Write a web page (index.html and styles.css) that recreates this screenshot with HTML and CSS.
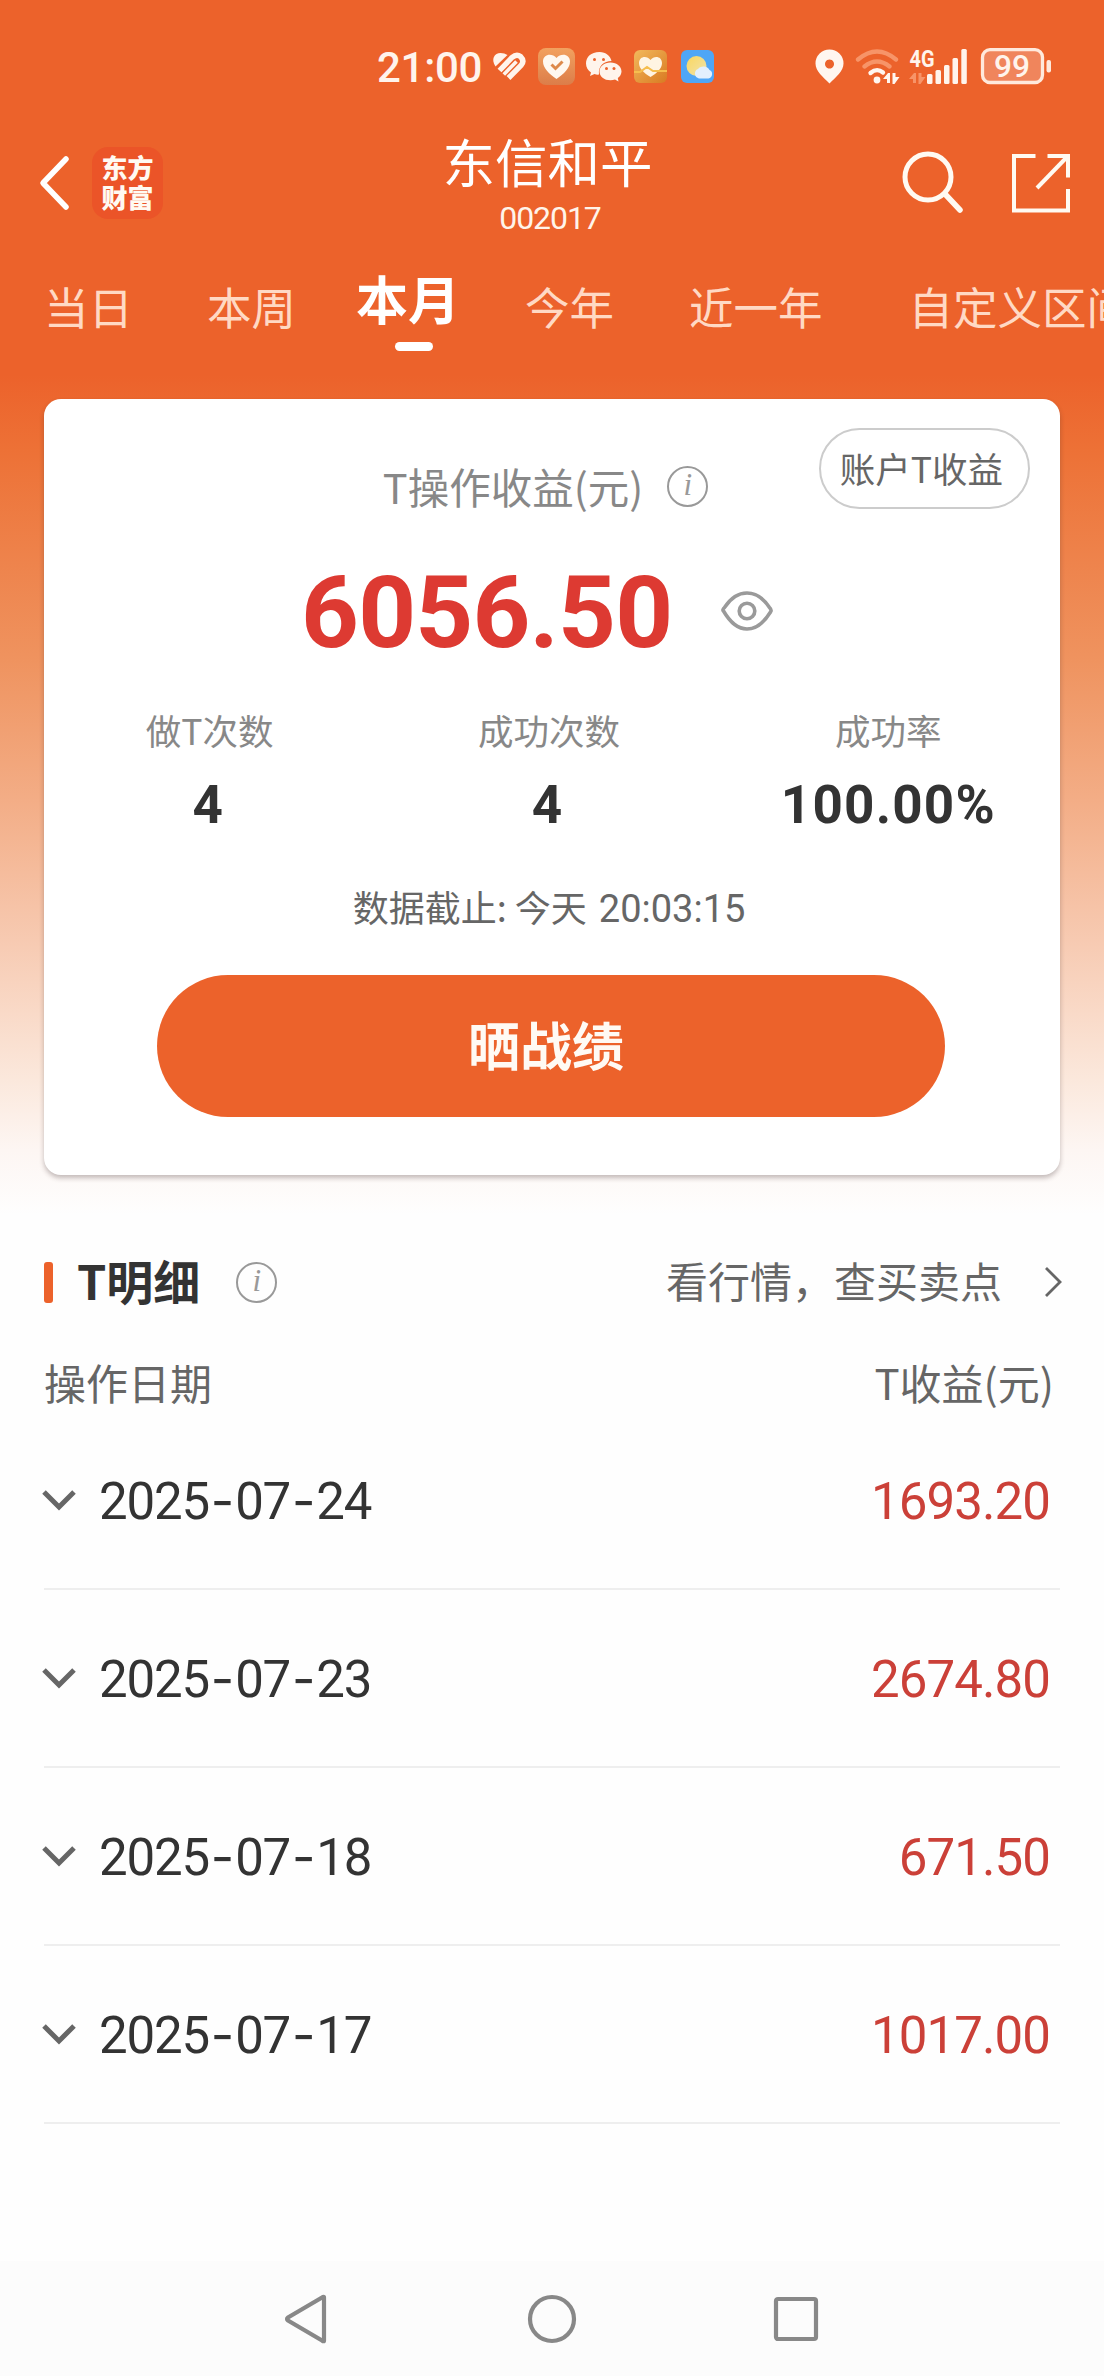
FILE: index.html
```html
<!DOCTYPE html>
<html lang="zh-CN">
<head>
<meta charset="utf-8">
<title>T操作收益</title>
<link rel="stylesheet" href="styles.css">
</head>
<body>
<div class="screen">
  <div class="status">
    <span class="clock">21:00</span>
    <svg class="notif" width="225" height="40" viewBox="490 46 225 40">
      <defs>
        <linearGradient id="gold" x1="0" y1="0" x2="1" y2="1"><stop offset="0" stop-color="#f2b95c"/><stop offset="1" stop-color="#d97a22"/></linearGradient>
        <linearGradient id="sun" x1="0" y1="0" x2="1" y2="1"><stop offset="0" stop-color="#fbd75e"/><stop offset="1" stop-color="#efe3ae"/></linearGradient>
        <linearGradient id="peach" x1="0" y1="0" x2="0" y2="1"><stop offset="0" stop-color="#f2a15f"/><stop offset="1" stop-color="#dc7d49"/></linearGradient>
      </defs>
      <path d="M495.500 66.500C490.500 59 494.500 53 500.500 53Q504.500 53 507.500 55Z" fill="#fff4ec"/>
      <path d="M499.500 70.500L512 57.500Q516.500 53.500 520.500 56.500Q525 61 521 65.500L508.500 78" fill="none" stroke="#fff4ec" stroke-width="5.400"/>
      <path d="M503.800 74.500L516.500 61.500" fill="none" stroke="#fff4ec" stroke-width="3.600"/>
      <rect x="538" y="48" width="37" height="37" rx="8" fill="url(#peach)"/>
      <path d="M556.500 79C549 74 543 68 543 61.500C543 54 552 52.500 556.500 58C561 52.500 570 54 570 61.500C570 68 564 74 556.500 79Z" fill="#fff8f0"/>
      <path d="M551.500 64.500l4 4 7-7" fill="none" stroke="#dd8a4c" stroke-width="3"/>
      <path d="M599.500 52C591 52 586 57 586 63.500C586 67.500 588 70.500 591 72.500L590 76L594.500 74Q597 75 599 74.500C598 66 604 61 611.500 61C610.500 56 606 52 599.500 52Z" fill="#fff4ec"/>
      <path d="M610.500 62.500C604 62.500 599.500 66.500 599.500 71.500C599.500 76.500 604 80.300 610.500 80.300Q613 80.300 615 79.500L618.500 81.500L617.800 78C620 76.500 621.500 74 621.500 71.500C621.500 66.500 617 62.500 610.500 62.500Z" fill="#fff4ec"/>
      <g fill="#ec622b"><circle cx="594.500" cy="59.500" r="1.500"/><circle cx="603.500" cy="59.500" r="1.500"/><circle cx="606.500" cy="68.500" r="1.500"/><circle cx="614" cy="68.500" r="1.500"/></g>
      <rect x="634" y="50" width="33" height="33" rx="6" fill="url(#gold)"/>
      <path d="M650.500 77C644 73 639 68.500 639 63C639 56 647 55 650.500 60C654 55 662 56 662 63C662 68.500 657 73 650.500 77Z" fill="#fff4e2"/>
      <path d="M634 72L640 72L647 67L653 71H667" fill="none" stroke="#f6be4e" stroke-width="2"/>
      <rect x="681" y="50" width="33" height="33" rx="6" fill="#4fa6f6"/>
      <circle cx="696.500" cy="66" r="10" fill="url(#sun)"/>
      <path d="M699 78.500a5 5 0 0 1-1-9.500a7 7 0 0 1 11.500 1a4.500 4.500 0 0 1-1 8.500z" fill="#e3effd"/>
    </svg>
    <svg class="signals" width="240" height="40" viewBox="813 46 240 40">
      <path d="M829.500 83.500C823 77 815.500 71 815.500 63.500a14 14 0 0 1 28 0C843.500 71 836 77 829.500 83.500ZM829.500 59.500a4.500 4.500 0 1 0 .01 0Z" fill="#fff6f0" fill-rule="evenodd"/>
      <g fill="none" stroke-width="4.300" stroke-linecap="round">
        <path d="M858 59.500Q877 43.500 896 59.500M864.500 66.500Q877 56.500 889.500 66.500" stroke="#f79468"/>
        <path d="M870.500 73Q877 67.500 883 72.500" stroke="#fff6f0"/>
      </g>
      <circle cx="877" cy="80" r="3.400" fill="#fff6f0"/>
      <path d="M883 79l5-6h2v10h-3v-4zM892.500 73h3v4h4l-5 7h-2z" fill="#fff6f0"/>
      <text x="909.500" y="67" class="net" textLength="25" lengthAdjust="spacingAndGlyphs">4G</text>
      <path d="M909 79l5-6h2v10h-3v-4zM918.500 73h3v4h4l-5 7h-2z" fill="#f79468"/>
      <g fill="#fff4ec"><rect x="927" y="74" width="5.500" height="10" rx="1.500"/><rect x="935.500" y="70" width="5.500" height="14" rx="1.500"/><rect x="944" y="65" width="5.500" height="19" rx="1.500"/><rect x="952.500" y="58" width="5.500" height="26" rx="1.500"/><rect x="961.300" y="49" width="5.500" height="35" rx="1.500"/></g>
      <rect x="982.500" y="49.700" width="60" height="32.800" rx="7.500" fill="#f0855c" stroke="#ffe9dc" stroke-width="3.300"/>
      <rect x="1046.500" y="60" width="4.500" height="12.500" rx="2" fill="#ffe9dc"/>
      <text x="994" y="77" class="batt" textLength="36" lengthAdjust="spacingAndGlyphs">99</text>
    </svg>
  </div>

  <header class="header">
    <div class="left">
      <svg width="32" height="56" viewBox="0 0 32 56"><path d="M28 4L5 28L28 52" fill="none" stroke="#fff" stroke-width="5.500" stroke-linecap="round" stroke-linejoin="round"/></svg>
      <div class="logo"><span>东方</span><span>财富</span></div>
    </div>
    <div class="heading">
      <h1>东信和平</h1>
      <span class="code">002017</span>
    </div>
    <div class="right">
      <svg width="64" height="64" viewBox="0 0 64 64" fill="none" stroke="#fffaf2"><ellipse cx="28" cy="26" rx="23" ry="23" stroke-width="5"/><path d="M45 43L60 59" stroke-width="5.500" stroke-linecap="round"/></svg>
      <svg width="60" height="60" viewBox="0 0 60 60" fill="none" stroke="#fffaf2" stroke-width="4"><path d="M24.500 3H3V57.500H57V36"/><path d="M36.500 3H57V24.500"/><path d="M56 4L26 35"/></svg>
    </div>
  </header>

  <nav class="tabs">
    <span class="tab t1">当日</span><span class="tab t2">本周</span><span class="tab active">本月</span><span class="tab t4">今年</span><span class="tab t5">近一年</span><span class="tab t6">自定义区间</span>
  </nav>

  <section class="card">
    <div class="card-head">
      <div class="label">T操作收益(元)<span class="info">i</span></div>
      <span class="pill">账户T收益</span>
    </div>
    <div class="total">
      <strong>6056.50</strong>
      <svg width="54" height="42" viewBox="0 0 54 42" fill="none" stroke="#9a9a9a" stroke-width="3.600"><path d="M3.500 21Q2 20 4.500 17.500Q14 3 27 3T49.500 17.500Q52 20 50.500 22Q40 39 27 39T3.500 21Z"/><circle cx="27" cy="21" r="7.800"/></svg>
    </div>
    <div class="stats">
      <div class="stat"><span>做T次数</span><b>4</b></div>
      <div class="stat"><span>成功次数</span><b>4</b></div>
      <div class="stat"><span>成功率</span><b class="rate">100.00%</b></div>
    </div>
    <p class="asof">数据截止: 今天 <span class="time">20:03:15</span></p>
    <div class="share">晒战绩</div>
  </section>

  <section class="detail">
    <div class="detail-head">
      <i class="mark"></i><h2>T明细</h2><span class="info">i</span>
      <span class="more">看行情，查买卖点</span>
      <svg width="20" height="32" viewBox="0 0 20 32"><path d="M3 2L17 16L3 30" fill="none" stroke="#666" stroke-width="2.800"/></svg>
    </div>
    <div class="cols"><span>操作日期</span><span>T收益(元)</span></div>
    <div class="row"><svg width="36" height="24" viewBox="0 0 36 24"><path d="M3 3L18 18L33 3"/></svg><span class="date">2025<i>-</i>07<i>-</i>24</span><span class="amt">1693.20</span></div>
    <div class="row"><svg width="36" height="24" viewBox="0 0 36 24"><path d="M3 3L18 18L33 3"/></svg><span class="date">2025<i>-</i>07<i>-</i>23</span><span class="amt">2674.80</span></div>
    <div class="row"><svg width="36" height="24" viewBox="0 0 36 24"><path d="M3 3L18 18L33 3"/></svg><span class="date">2025<i>-</i>07<i>-</i>18</span><span class="amt">671.50</span></div>
    <div class="row"><svg width="36" height="24" viewBox="0 0 36 24"><path d="M3 3L18 18L33 3"/></svg><span class="date">2025<i>-</i>07<i>-</i>17</span><span class="amt">1017.00</span></div>
  </section>

  <footer class="navbar">
    <svg width="44" height="50" viewBox="0 0 44 50"><path d="M40 3.500V46.500Q40 48 38 46.500L4 26.500Q2 25 4 23.500L38 3.500Q40 2 40 3.500Z"/></svg>
    <svg width="50" height="50" viewBox="0 0 50 50"><circle cx="25" cy="25" r="22"/></svg>
    <svg width="46" height="46" viewBox="0 0 46 46"><rect x="3" y="3" width="40" height="40" rx="2"/></svg>
  </footer>
</div>
</body>
</html>
```
FILE: styles.css
```css
* { box-sizing: border-box; margin: 0; padding: 0; }
body { background: #fefefe; font-family: "Noto Sans CJK SC", sans-serif; color: #333; }
i { font-style: normal; }
svg { display: block; flex: none; }

.screen {
  width: 1104px; height: 2376px; overflow: hidden;
  display: flex; flex-direction: column;
  background: linear-gradient(#ec622b 0, #ec622b 375px, #ed7136 450px, #ef935f 660px, #f3ad86 800px, #f7cbb3 945px, #fbe8dc 1080px, #fdf6f3 1150px, #fefefe 1215px);
}

.status { height: 130px; padding: 46px 0 0 377px; display: flex; align-items: flex-start; }
.clock { width: 113px; font: 500 42px/43px Roboto, sans-serif; color: #fff4ec; letter-spacing: -.3px; }
.signals { margin-left: 98px; }
.net { font: 700 23px Roboto, sans-serif; fill: #fff4ec; }
.batt { font: 500 32px Roboto, sans-serif; fill: #fff4ec; }

.header { height: 106px; padding: 0 33px 0 38px; display: grid; grid-template-columns: 300px 1fr 300px; align-items: center; }
.left, .right { display: flex; align-items: center; }
.left { gap: 22px; }
.right { justify-content: flex-end; gap: 47px; }
.logo {
  width: 71px; height: 72px; border-radius: 16px; background: #eb5428; color: #fffaf2;
  display: flex; flex-direction: column; align-items: center; padding-top: 5px;
  font: 900 26px/30px "Noto Sans CJK SC", sans-serif;
}
.heading { text-align: center; color: #fff; padding-right: 9px; }
.heading h1 { margin: 0 5px 10px 0; font-size: 52.500px; font-weight: 400; line-height: 60px; white-space: nowrap; }
.code { display: block; font: 400 32px/36px Roboto, sans-serif; letter-spacing: -1.100px; color: #fff4ea; }

.tabs { height: 163px; padding: 32px 0 0 44px; display: flex; align-items: flex-start; white-space: nowrap; }
.tab { margin-top: 8px; font-size: 44.500px; line-height: 60px; color: #ffd9c4; flex: none; }
.t2 { margin-left: 74px; }
.t4 { margin-left: 65px; }
.t5 { margin-left: 75px; }
.t6 { margin-left: 86px; }
.tab.active { margin: 0 0 0 60px; font-size: 52px; font-weight: 700; color: #fff; }
.tab.active::after { content: ""; display: block; width: 38px; height: 9px; border-radius: 5px; background: #fff; margin: 14px 0 0 39px; }

.card { height: 776px; margin: 0 44px; padding-top: 29px; border-radius: 17px; background: #fff; box-shadow: 0 3px 5px rgba(60, 40, 40, .3); flex: none; }
.card-head { height: 81px; padding: 0 30px 0 17px; display: grid; grid-template-columns: 1fr auto 1fr; }
.label { grid-column: 2; align-self: end; height: 45px; display: flex; align-items: center; gap: 24px; font-size: 41.500px; line-height: 39px; color: #888; }
.info { width: 41px; height: 41px; border: 2.500px solid #999; border-radius: 50%; text-align: center; font: italic 31px/34px "Liberation Serif", serif; color: #999; flex: none; }
.pill { justify-self: end; width: 211px; height: 81px; border: 2px solid #ccc; border-radius: 41px; text-align: center; padding-right: 6px; font-size: 35.500px; line-height: 75px; color: #666; }
.total { margin-top: 48px; padding-left: 257px; height: 110px; display: flex; align-items: center; gap: 48px; }
.total strong { font: 700 101px/110px Roboto, sans-serif; letter-spacing: -.800px; padding-top: 2px; color: #dd3a32; }
.total svg { margin-top: -2px; }
.stats { margin: 41px -2px 0 -4px; padding-right: 4px; display: grid; grid-template-columns: repeat(3, 1fr); }
.stat { display: flex; flex-direction: column; align-items: center; gap: 23px; }
.stat span { font-size: 35.500px; line-height: 44px; color: #888; }
.stat b { font: 700 53px/60px Roboto, sans-serif; color: #333; padding-right: 4px; }
.stat .rate { letter-spacing: 1.200px; padding-right: 0; }
.asof { height: 44px; margin-top: 49px; padding-right: 6px; text-align: center; font-size: 36px; line-height: 44px; color: #666; }
.time { font: 400 38px/44px Roboto, sans-serif; margin-left: 4px; }
.share { width: 788px; height: 142px; margin: 47px 0 0 113px; border-radius: 71px; background: #ec622b; color: #fffaf4; text-align: center; font-size: 52px; font-weight: 700; line-height: 137px; padding-right: 10px; }

.detail { margin-top: 77px; padding: 0 44px; }
.detail-head { height: 60px; margin-right: -3px; display: flex; align-items: center; }
.mark { width: 9px; height: 41px; border-radius: 3px; background: #ec622b; }
.detail-head h2 { margin-left: 24px; font-size: 47px; font-weight: 700; line-height: 54px; padding-bottom: 4px; }
.detail-head .info { margin-left: 36px; }
.more { margin: 0 41px 0 auto; font-size: 42px; line-height: 56px; padding-bottom: 4px; color: #666; }
.cols { margin-top: 40px; padding-right: 6px; height: 60px; display: flex; justify-content: space-between; font-size: 42px; line-height: 60px; color: #666; }
.row { height: 178px; border-bottom: 2px solid #eee; display: flex; align-items: center; }
.row svg { margin: 2px 0 0 -3px; fill: none; stroke: #666; stroke-width: 5; }
.date { margin-left: 22px; padding-top: 3px; font: 400 51px/60px Roboto, sans-serif; letter-spacing: -1.200px; }
.date i { font-family: Inter, sans-serif; padding: 0 2px; }
.amt { margin-left: auto; padding: 3px 10px 0 0; font: 400 51px/60px Roboto, sans-serif; letter-spacing: -.900px; color: #cb4038; }

.navbar { height: 115px; margin-top: auto; flex: none; background: #fcfcfc; display: flex; align-items: center; padding-left: 284px; }
.navbar svg { fill: none; stroke: #888; stroke-width: 4.200; }
.navbar svg:nth-child(2) { margin-left: 199px; }
.navbar svg:nth-child(3) { margin-left: 196px; }
```
